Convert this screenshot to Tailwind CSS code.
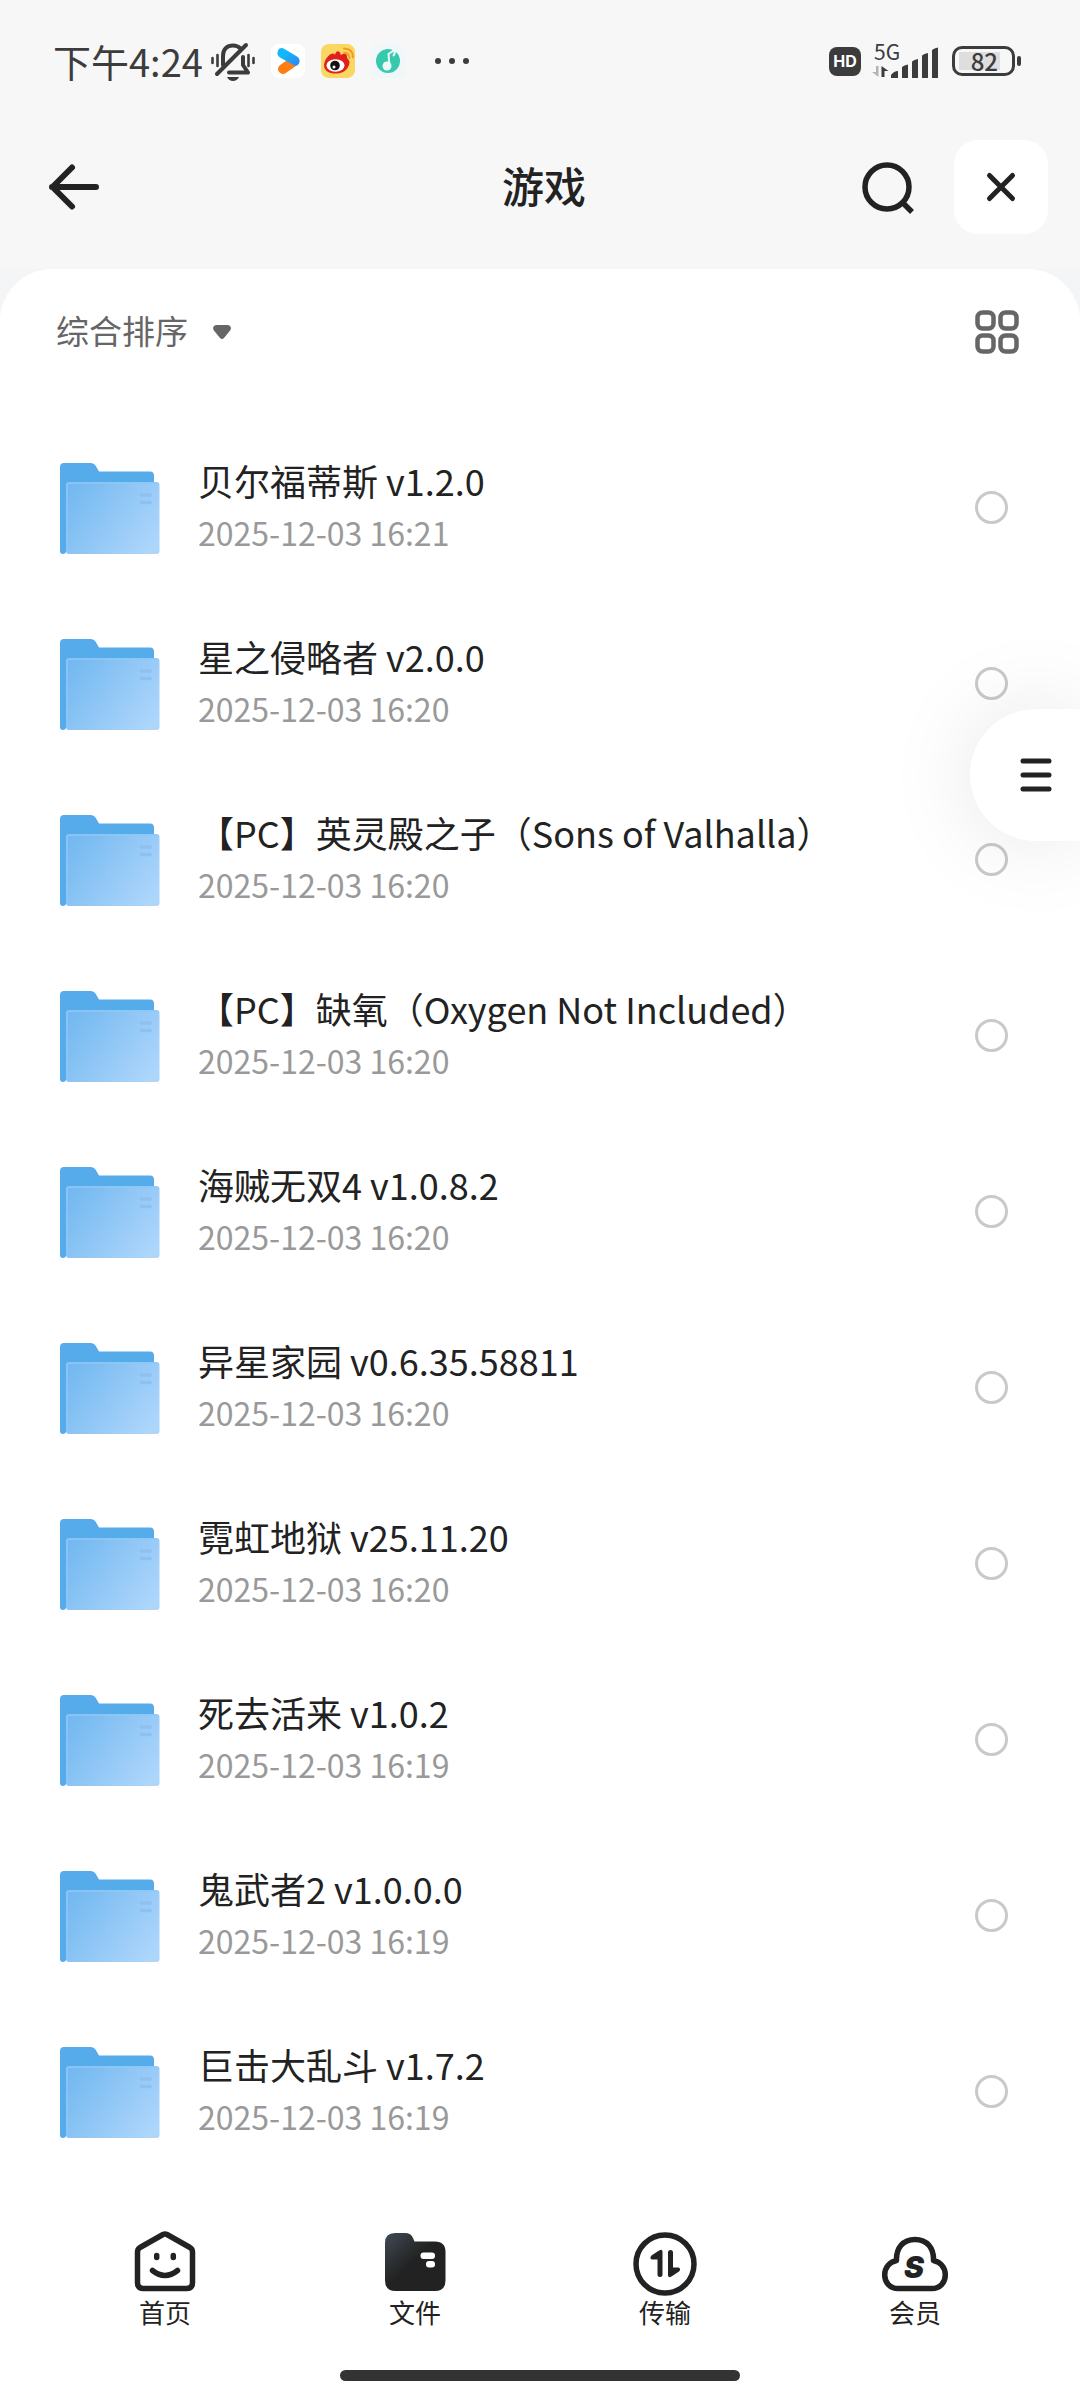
<!DOCTYPE html>
<html lang="zh-CN">
<head>
<meta charset="utf-8">
<meta name="viewport" content="width=device-width, initial-scale=1">
<title>游戏</title>
<script src="https://cdn.jsdelivr.net/npm/@tailwindcss/browser@4"></script>
</head>
<body class="relative flex min-h-screen flex-col overflow-x-hidden bg-[#f7f7f7] font-['Noto_Sans_CJK_SC',sans-serif] text-[#222222]">

<svg class="absolute size-0" aria-hidden="true">
  <defs>
    <linearGradient id="front" x1="0" y1="0.2" x2="1" y2="0.8">
      <stop offset="0" stop-color="#74b9f1"/><stop offset="1" stop-color="#aed6fb"/>
    </linearGradient>
    <linearGradient id="dark" x1="0" y1="0" x2="0.8" y2="0.8">
      <stop offset="0.1" stop-color="#3b444d"/><stop offset="0.6" stop-color="#222222"/>
    </linearGradient>
    <linearGradient id="play" x1="0" y1="0" x2="1" y2="1">
      <stop offset="0.3" stop-color="#12b8fc"/><stop offset="1" stop-color="#2f86f5"/>
    </linearGradient>
  </defs>
  <symbol id="folder" viewBox="0 -4 100 96">
    <path d="M4 0H31q3 0 4.500 2.500L39 8.500H90q4 0 4 4V40H6V88q0 3-3 3t-3-3V4q0-4 4-4z" fill="#56abeb"/>
    <rect x="6" y="19" width="93.500" height="72" rx="3" fill="url(#front)"/>
    <path d="M7 88V22q0-2 2-2H96" fill="none" stroke="#8fc8f6" stroke-width="1.500"/>
    <path d="M80 32H91.500M80 39.500H91.500" stroke="#8fc1f0" stroke-width="3.500"/>
  </symbol>
</svg>

<!-- status bar -->
<div class="flex h-[122px] shrink-0 items-center justify-between pr-[59px] pl-[53px] text-[#3c3c3c]">
  <div class="flex items-center">
    <span class="text-[38px] leading-none">下午4:24</span>
    <svg class="ml-2 h-10 w-11" viewBox="0 0 44 40" fill="none" stroke="#3c3c3c" stroke-linecap="round">
      <path d="M12 24V15C12 8 16 4.500 22 4.500c3 0 5.500 1 7.500 3" stroke-width="4"/>
      <path d="M32 16v8l5 7.500H18" stroke-width="4" stroke-linejoin="round"/>
      <path d="M6 33L35 4" stroke-width="4"/>
      <path d="M1.500 17v5M6.500 14v11M37.500 14v11M42.500 17v5" stroke-width="2.600"/>
      <path d="M16 36h12q-2 4-6 4t-6-4z" fill="#3c3c3c" stroke="none"/>
    </svg>
    <svg class="ml-4 size-[34px]" viewBox="0 0 34 34">
      <rect width="34" height="34" rx="8" fill="#fff"/>
      <path d="M12 25L22 18" stroke="#ff7e12" stroke-width="10" stroke-linecap="round"/>
      <path d="M8.500 4.500Q11 3.500 13.500 5L26 12.500Q30 15.500 28 19.500 26 23 22.500 21L9 13.500Q6 11.500 6.500 8.500 7 5.500 8.500 4.500z" fill="url(#play)"/>
    </svg>
    <svg class="ml-4 size-[34px]" viewBox="0 0 34 34">
      <rect width="34" height="34" rx="8" fill="#fbd660"/>
      <path d="M3 21C4 14 9 9.500 12 9.500q2 0 2 1.500Q15 6.500 18 7.500q2 1 1.500 3.500 6-3 6.500 1-.5 2 1 3 3 3 0 8C25 27 21 29.500 15 29.500 8 29.500 3 27 3 21z" fill="#e0201f"/>
      <ellipse cx="14.500" cy="21.500" rx="9" ry="6.200" fill="#fff"/>
      <circle cx="14" cy="21.500" r="4.800" fill="#111"/><circle cx="13" cy="23" r="1.500" fill="#fff"/>
      <path d="M23 9q5-.5 5.500 5M23 4.500q9 0 9 9" fill="none" stroke="#f39a22" stroke-width="2" stroke-linecap="round"/>
    </svg>
    <svg class="ml-4 size-[34px]" viewBox="0 0 34 34">
      <rect width="34" height="34" rx="8" fill="#f1f7f9"/>
      <circle cx="17" cy="17" r="12" fill="#36c9ae"/>
      <circle cx="16" cy="22" r="4.500" fill="#eefaf8"/>
      <path d="M18.500 22L17.500 10l6-4q1 4-1.500 6" fill="none" stroke="#eefaf8" stroke-width="2"/>
    </svg>
    <svg class="ml-7 h-2 w-10" viewBox="0 0 40 8" fill="#3c3c3c"><circle cx="5" cy="4" r="3"/><circle cx="19" cy="4" r="3"/><circle cx="33" cy="4" r="3"/></svg>
  </div>
  <div class="flex items-center">
    <span class="flex h-[29px] w-8 items-center justify-center rounded-lg bg-[#3c3c3c] font-[Inter,sans-serif] text-[16px] font-bold text-white">HD</span>
    <div class="relative ml-[10px] h-9 w-[68px]">
      <span class="absolute top-0 left-[3px] text-[21px] leading-4">5G</span>
      <svg class="h-9 w-[68px]" viewBox="0 0 68 36">
        <path d="M5 23h2.500v11L1 29h4z" fill="#b4b4b4"/><path d="M10.500 34V23l7 5h-4v6z" fill="#3c3c3c"/>
        <path d="M20 35v-3q3-4 7-4v7zM31 35V24q2-2 6-2.500V35zM41 35V18.500q2-2 6-2.500V35zM51 35V12.500q2-2 6-2.500V35zM61 35V7q2-2 6-2.500V35z" fill="#3c3c3c"/>
      </svg>
    </div>
    <div class="ml-[13px] flex h-[30px] w-[63px] items-center rounded-[10px] border-3 border-[#3c3c3c] px-1">
      <span class="flex h-[18px] w-[41px] items-center justify-end bg-[#dedede] pr-[2px] text-[24px] leading-none font-medium">82</span>
    </div>
    <span class="ml-[2px] h-[10px] w-1 rounded-sm bg-[#3c3c3c]"></span>
  </div>
</div>

<!-- title bar -->
<header class="grid shrink-0 grid-cols-[1fr_auto_1fr] items-center pt-[18px] pr-8 pb-[35px] pl-10">
  <button type="button" aria-label="返回" class="size-[68px]">
    <svg class="size-[68px]" viewBox="0 0 68 68" fill="none" stroke="#222" stroke-width="6" stroke-linecap="round" stroke-linejoin="round"><path d="M56 34H12M32 14.500L12.500 34 32 53.500"/></svg>
  </button>
  <h1 class="pb-1 text-[42px] leading-[60px] font-medium">游戏</h1>
  <div class="flex items-center justify-end gap-8">
    <button type="button" aria-label="搜索" class="size-[68px]">
      <svg class="size-[68px]" viewBox="0 0 68 68" fill="none" stroke="#222" stroke-width="5.500"><circle cx="33" cy="34" r="22"/><path d="M49 50l9 9"/></svg>
    </button>
    <button type="button" aria-label="关闭" class="flex size-[94px] items-center justify-center rounded-3xl bg-white">
      <svg class="size-10" viewBox="0 0 40 40" stroke="#222" stroke-width="5" stroke-linecap="round"><path d="M8.500 8.500l23 23M31.500 8.500L8.500 31.500"/></svg>
    </button>
  </div>
</header>

<div class="flex flex-1 flex-col bg-[#f3f5f6]">
<main class="flex-1 rounded-t-[52px] bg-white">
  <div class="flex h-[126px] items-center justify-between pr-[61px] pl-14 text-[#666666]">
    <label class="flex items-center gap-6">
      <select aria-label="排序方式" class="appearance-none bg-transparent pb-1 text-[33px] leading-[48px] outline-none"><option>综合排序</option></select>
      <svg class="h-4 w-5" viewBox="0 0 20 16"><path d="M4 1h12q4 1 2.500 5l-6.500 8q-2 2-4 0L1.500 6Q0 2 4 1z" fill="#666"/></svg>
    </label>
    <button type="button" aria-label="网格视图">
      <svg class="size-11" viewBox="0 0 44 44" fill="none" stroke="#666" stroke-width="4.500"><rect x="2.500" y="2.500" width="16" height="16" rx="5"/><rect x="25.500" y="2.500" width="16" height="16" rx="5"/><rect x="2.500" y="25.500" width="16" height="16" rx="5"/><rect x="25.500" y="25.500" width="16" height="16" rx="5"/></svg>
    </button>
  </div>

  <ul class="pt-6">
    <li><label class="flex h-44 items-center gap-[38px] pr-[72px] pl-[60px]"><svg class="h-24 w-[100px] shrink-0"><use href="#folder"/></svg><span class="flex min-w-0 flex-1 flex-col pb-[2px] leading-[52px]"><span class="text-[36px]">贝尔福蒂斯 v1.2.0</span><time class="text-[32px] text-[#999999]">2025-12-03 16:21</time></span><input type="checkbox" class="size-[33px] appearance-none rounded-full border-3 border-[#c8c9cc]"></label></li>
    <li><label class="flex h-44 items-center gap-[38px] pr-[72px] pl-[60px]"><svg class="h-24 w-[100px] shrink-0"><use href="#folder"/></svg><span class="flex min-w-0 flex-1 flex-col pb-[2px] leading-[52px]"><span class="text-[36px]">星之侵略者 v2.0.0</span><time class="text-[32px] text-[#999999]">2025-12-03 16:20</time></span><input type="checkbox" class="size-[33px] appearance-none rounded-full border-3 border-[#c8c9cc]"></label></li>
    <li><label class="flex h-44 items-center gap-[38px] pr-[72px] pl-[60px]"><svg class="h-24 w-[100px] shrink-0"><use href="#folder"/></svg><span class="flex min-w-0 flex-1 flex-col pb-[2px] leading-[52px]"><span class="text-[36px]">【PC】英灵殿之子（Sons of Valhalla）</span><time class="text-[32px] text-[#999999]">2025-12-03 16:20</time></span><input type="checkbox" class="size-[33px] appearance-none rounded-full border-3 border-[#c8c9cc]"></label></li>
    <li><label class="flex h-44 items-center gap-[38px] pr-[72px] pl-[60px]"><svg class="h-24 w-[100px] shrink-0"><use href="#folder"/></svg><span class="flex min-w-0 flex-1 flex-col pb-[2px] leading-[52px]"><span class="text-[36px]">【PC】缺氧（Oxygen Not Included）</span><time class="text-[32px] text-[#999999]">2025-12-03 16:20</time></span><input type="checkbox" class="size-[33px] appearance-none rounded-full border-3 border-[#c8c9cc]"></label></li>
    <li><label class="flex h-44 items-center gap-[38px] pr-[72px] pl-[60px]"><svg class="h-24 w-[100px] shrink-0"><use href="#folder"/></svg><span class="flex min-w-0 flex-1 flex-col pb-[2px] leading-[52px]"><span class="text-[36px]">海贼无双4 v1.0.8.2</span><time class="text-[32px] text-[#999999]">2025-12-03 16:20</time></span><input type="checkbox" class="size-[33px] appearance-none rounded-full border-3 border-[#c8c9cc]"></label></li>
    <li><label class="flex h-44 items-center gap-[38px] pr-[72px] pl-[60px]"><svg class="h-24 w-[100px] shrink-0"><use href="#folder"/></svg><span class="flex min-w-0 flex-1 flex-col pb-[2px] leading-[52px]"><span class="text-[36px]">异星家园 v0.6.35.58811</span><time class="text-[32px] text-[#999999]">2025-12-03 16:20</time></span><input type="checkbox" class="size-[33px] appearance-none rounded-full border-3 border-[#c8c9cc]"></label></li>
    <li><label class="flex h-44 items-center gap-[38px] pr-[72px] pl-[60px]"><svg class="h-24 w-[100px] shrink-0"><use href="#folder"/></svg><span class="flex min-w-0 flex-1 flex-col pb-[2px] leading-[52px]"><span class="text-[36px]">霓虹地狱 v25.11.20</span><time class="text-[32px] text-[#999999]">2025-12-03 16:20</time></span><input type="checkbox" class="size-[33px] appearance-none rounded-full border-3 border-[#c8c9cc]"></label></li>
    <li><label class="flex h-44 items-center gap-[38px] pr-[72px] pl-[60px]"><svg class="h-24 w-[100px] shrink-0"><use href="#folder"/></svg><span class="flex min-w-0 flex-1 flex-col pb-[2px] leading-[52px]"><span class="text-[36px]">死去活来 v1.0.2</span><time class="text-[32px] text-[#999999]">2025-12-03 16:19</time></span><input type="checkbox" class="size-[33px] appearance-none rounded-full border-3 border-[#c8c9cc]"></label></li>
    <li><label class="flex h-44 items-center gap-[38px] pr-[72px] pl-[60px]"><svg class="h-24 w-[100px] shrink-0"><use href="#folder"/></svg><span class="flex min-w-0 flex-1 flex-col pb-[2px] leading-[52px]"><span class="text-[36px]">鬼武者2 v1.0.0.0</span><time class="text-[32px] text-[#999999]">2025-12-03 16:19</time></span><input type="checkbox" class="size-[33px] appearance-none rounded-full border-3 border-[#c8c9cc]"></label></li>
    <li><label class="flex h-44 items-center gap-[38px] pr-[72px] pl-[60px]"><svg class="h-24 w-[100px] shrink-0"><use href="#folder"/></svg><span class="flex min-w-0 flex-1 flex-col pb-[2px] leading-[52px]"><span class="text-[36px]">巨击大乱斗 v1.7.2</span><time class="text-[32px] text-[#999999]">2025-12-03 16:19</time></span><input type="checkbox" class="size-[33px] appearance-none rounded-full border-3 border-[#c8c9cc]"></label></li>
  </ul>
</main>
</div>

<!-- bottom tabs -->
<footer class="shrink-0 bg-white pb-[19px]">
  <nav class="grid grid-cols-4 px-10 pt-[50px] pb-[43px] text-[26px] leading-[26px]">
    <a href="#" class="flex flex-col items-center">
      <svg class="size-[68px]" viewBox="0 0 68 68" fill="none" stroke="#222" stroke-width="5.500" stroke-linecap="round" stroke-linejoin="round"><path d="M32 3.500q2-1 4 0L59 16.500q2.500 1.500 2.500 4.500V51.500q0 6-6 6h-43q-6 0-6-6V21q0-3 2.500-4.500z"/><path d="M25.700 24.500v2M42.300 24.500v2"/><path d="M21.500 39.500Q34 49.500 46.500 39.500"/></svg>
      <span class="pb-[2px]">首页</span>
    </a>
    <a href="#" aria-current="page" class="flex flex-col items-center">
      <svg class="size-[68px]" viewBox="0 0 68 68"><path d="M14 2H24q6 0 8 5l1.500 3.500H54q10.500 0 10.500 10.500V49.500Q64.500 60 54 60H14.500Q4 60 4 49.500V12Q4 2 14 2z" fill="url(#dark)"/><rect x="39.500" y="21.500" width="14.500" height="6.500" rx="3" fill="#fff"/><rect x="45" y="30" width="9" height="6.500" rx="3" fill="#fff"/></svg>
      <span class="pb-[2px]">文件</span>
    </a>
    <a href="#" class="flex flex-col items-center">
      <svg class="size-[68px]" viewBox="0 0 68 68"><circle cx="34" cy="33" r="29" fill="none" stroke="#222" stroke-width="5.500"/><path d="M26.500 20.500q5-3.500 5 .5V43.500a2.500 2.500 0 0 1-5 0V28.500H21q-3-1-.5-4z" fill="#222"/><path d="M42 44.500q-5 3.500-5-.5V21.500a2.500 2.500 0 0 1 5 0V36.500h5.500q3 1 .5 4z" fill="#222"/></svg>
      <span class="pb-[2px]">传输</span>
    </a>
    <a href="#" class="flex flex-col items-center">
      <svg class="size-[68px]" viewBox="0 0 68 68"><path d="M17 57.500C9 57.500 3.700 51.500 3.700 44 3.700 36 9 31 15.500 29.500 15 17 22 8.500 34 8.500S53 17 52.500 29.500C59 31 64.300 36 64.300 44c0 7.500-5.300 13.500-13.300 13.500z" fill="none" stroke="#222" stroke-width="5.500" stroke-linejoin="round"/><text x="33" y="47" text-anchor="middle" font-family="Inter, sans-serif" font-size="30" font-weight="900" font-style="italic" fill="#222">S</text></svg>
      <span class="pb-[2px]">会员</span>
    </a>
  </nav>
  <div class="mx-auto h-[11px] w-[37%] rounded-full bg-[#333333]"></div>
</footer>

<!-- floating menu handle -->
<button type="button" aria-label="菜单" class="absolute top-[709px] right-0 flex h-[132px] w-[110px] items-center justify-end rounded-l-full bg-white pr-7 shadow-[0_0_90px_rgba(0,0,0,0.10)]">
  <svg class="h-9 w-8" viewBox="0 0 32 36" stroke="#222" stroke-width="5" stroke-linecap="round"><path d="M3 4h26M3 18h26M3 32h26"/></svg>
</button>
</body>
</html>
